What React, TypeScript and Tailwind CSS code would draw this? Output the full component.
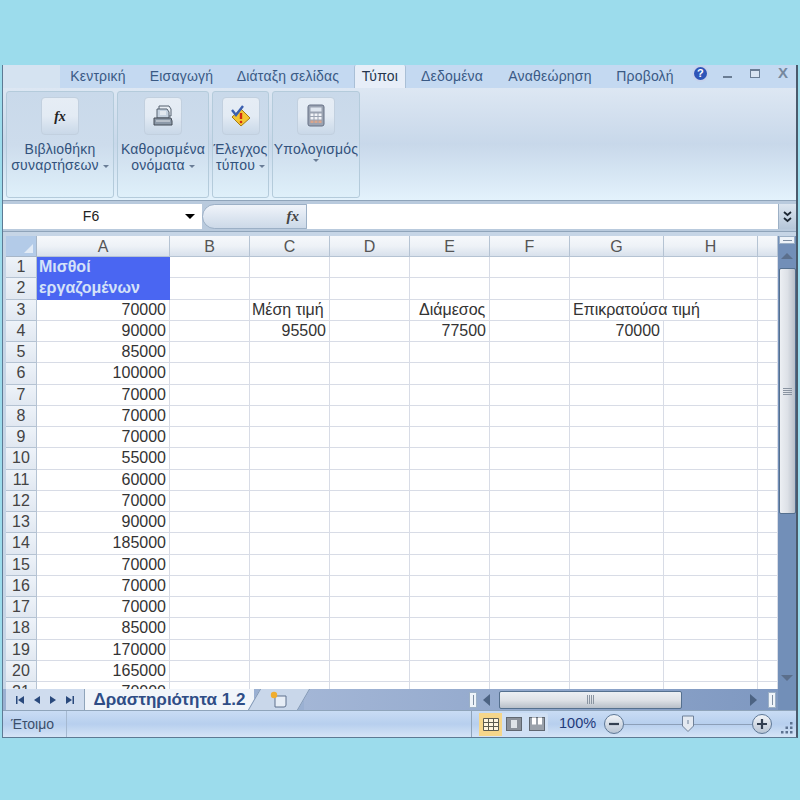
import React from "react";

const colWidths = [133, 80, 80, 80, 80, 80, 94, 94, 20];
const colNames = ["A", "B", "C", "D", "E", "F", "G", "H", ""];
const salaries = [
  70000, 90000, 85000, 100000, 70000, 70000, 70000, 55000, 60000, 70000, 90000,
  185000, 70000, 70000, 70000, 85000, 170000, 165000, 70000,
];

const tabs = [
  { label: "Κεντρική", w: "w-[70px]" },
  { label: "Εισαγωγή", w: "w-[97px]" },
  { label: "Διάταξη σελίδας", w: "w-[116px]" },
];
const tabsRight = [
  { label: "Δεδομένα", w: "w-[92px]" },
  { label: "Αναθεώρηση", w: "w-[104px]" },
  { label: "Προβολή", w: "w-[86px]" },
];

const FxIcon = ({ small }: { small?: boolean }) => (
  <span
    className={`font-['Liberation_Serif',serif] italic font-bold ${small ? "text-[15px] text-[#444]" : "text-[14px] text-[#222]"}`}
  >
    fx
  </span>
);

const PrinterIcon = () => (
  <svg width="24" height="24" viewBox="0 0 24 24">
    <path d="M8 2h10l2 3v7H8z" fill="#e8eef5" stroke="#55606e" />
    <path d="M6 5h10l2 3v6H6z" fill="#c5d2e0" stroke="#55606e" />
    <path d="M9 8h6M9 10h6" stroke="#fff" />
    <path d="M3 14h17l1 3v4H3z" fill="#8c99a8" stroke="#444c56" />
    <path d="M5 17h14" stroke="#e4e8ec" />
  </svg>
);

const CheckIcon = () => (
  <svg width="24" height="24" viewBox="0 0 24 24">
    <path d="M12 5l9 9-9 8-9-9z" fill="#f3c632" stroke="#a87a12" />
    <path d="M12 9v6" stroke="#d12b12" strokeWidth="2.4" />
    <circle cx="12" cy="18" r="1.3" fill="#d12b12" />
    <path d="M3 6l4 5 7-9" fill="none" stroke="#3a5fb0" strokeWidth="2.4" />
  </svg>
);

const CalcIcon = () => (
  <svg width="20" height="24" viewBox="0 0 20 24">
    <rect x="2" y="1" width="16" height="21" rx="2" fill="#9aa3b2" stroke="#667085" />
    <rect x="4.5" y="3.5" width="11" height="4" fill="#dfe6ef" />
    {[9.5, 13, 16.5].map((y) =>
      [4.5, 8.5, 12.5].map((x) => (
        <rect key={`${x}-${y}`} x={x} y={y} width="3" height="2.5" fill={y === 16.5 ? "#d9a58c" : "#f2f4f8"} />
      )),
    )}
  </svg>
);

const Caret = () => (
  <span className="inline-block w-0 h-0 ml-[4px] mb-[2px] border-x-[3px] border-x-transparent border-t-[3px] border-t-[#6a7d96]" />
);

const RibbonGroup = ({
  w,
  icon,
  line1,
  line2,
  caretOwnLine,
}: {
  w: string;
  icon: React.ReactNode;
  line1: string;
  line2?: string;
  caretOwnLine?: boolean;
}) => (
  <div
    className={`${w} h-[107px] mr-[3px] shrink-0 flex flex-col items-center rounded-[3px] border border-[#b4cbdb] bg-gradient-to-b from-[#c9d9ea] via-[#cddcec] to-[#dff0fa] pt-[5px]`}
  >
    <div className="w-[38px] h-[38px] rounded-[4px] flex items-center justify-center bg-gradient-to-b from-[#e6edf5] via-[#e3ebf4] to-[#c9d8e8] border border-[#c2d0df]">
      {icon}
    </div>
    <div className="mt-[6px] text-[14px] leading-[16px] text-center text-[#32527c] whitespace-nowrap tracking-[0.2px]">
      <div>{line1}</div>
      {caretOwnLine ? (
        <div className="flex justify-center pt-[2px]">
          <span className="inline-block w-0 h-0 border-x-[3px] border-x-transparent border-t-[3px] border-t-[#6a7d96]" />
        </div>
      ) : (
        <div>
          {line2}
          <Caret />
        </div>
      )}
    </div>
  </div>
);

const ScrollArrow = ({ d }: { d: string }) => (
  <svg width="12" height="10" viewBox="0 0 12 10">
    <path d={d} fill="#5b6f8c" />
  </svg>
);

const ScrollArrowLeft = () => (
  <svg width="8" height="12" viewBox="0 0 8 12" className="shrink-0">
    <path d="M7 0v12L0 6z" fill="#4c6383" />
  </svg>
);

const ScrollArrowRight = () => (
  <svg width="8" height="12" viewBox="0 0 8 12" className="shrink-0">
    <path d="M1 0v12l7-6z" fill="#4c6383" />
  </svg>
);

const ZoomBtn = ({ sign }: { sign: "minus" | "plus" }) => (
  <div className="w-[20px] h-[20px] shrink-0 rounded-full border border-[#5f7896] bg-gradient-to-b from-[#f1f4f8] to-[#b9c5d4] flex items-center justify-center">
    <svg width="12" height="12" viewBox="0 0 12 12">
      <path d={sign === "plus" ? "M1 6h10M6 1v10" : "M1 6h10"} stroke="#333f50" strokeWidth="2.2" />
    </svg>
  </div>
);

const Row = ({ n, clipped }: { n: number; clipped?: boolean }) => {
  const salary = n >= 3 ? salaries[n - 3] : null;
  const cell = (i: number) => {
    if (i === 0 && n === 1) return <span className="font-bold text-[#d5e2f8] pl-[2px]">Μισθοί</span>;
    if (i === 0 && n === 2) return <span className="font-bold text-[#d5e2f8] pl-[2px]">εργαζομένων</span>;
    if (i === 0 && salary) return <span className="block text-right pr-[3px]">{salary}</span>;
    if (n === 3 && i === 2) return <span className="pl-[2px]">Μέση τιμή</span>;
    if (n === 3 && i === 4) return <span className="block pl-[9px]">Διάμεσος</span>;
    if (n === 3 && i === 6) return <span className="pl-[3px] whitespace-nowrap">Επικρατούσα τιμή</span>;
    if (n === 4 && i === 2) return <span className="block text-right pr-[3px]">95500</span>;
    if (n === 4 && i === 4) return <span className="block text-right pr-[3px]">77500</span>;
    if (n === 4 && i === 6) return <span className="block text-right pr-[3px]">70000</span>;
    return null;
  };
  return (
    <div className={`flex ${clipped ? "h-[7px] overflow-hidden" : "h-[21.25px]"}`}>
      <div className="w-[31px] shrink-0 h-[21.25px] flex items-center justify-center border-r border-b border-[#b5c3d3] bg-gradient-to-b from-[#eef3f9] to-[#e1e8f1] text-[16px] text-[#444]">
        {n}
      </div>
      {colWidths.map((w, i) => {
        const blue = i === 0 && n <= 2;
        return (
          <div
            key={i}
            style={{ width: w }}
            className={`shrink-0 h-[21.25px] leading-[20px] text-[16px] text-[#333] ${
              blue ? "bg-[#4a66f2]" : "border-r border-b border-[#d8dce6]"
            } ${i === 6 && n === 3 ? "border-r-0" : ""}`}
          >
            {cell(i)}
          </div>
        );
      })}
    </div>
  );
};

export default function App() {
  return (
    <div className="w-[800px] h-[800px] overflow-hidden bg-[#9cdcec] pt-[65px] pl-[2px] font-['Liberation_Sans',sans-serif]">
      <div className="w-[796px] h-[673px] flex flex-col bg-[#c5d6ea] border-l border-[#5d7a94] border-b border-b-[#5d7a94] border-r-[2px] border-r-[#4a5a6c]">
        {/* tab strip */}
        <div className="h-[23px] flex items-center bg-[#c4d9f1] text-[14px] text-[#3a5a85] shrink-0 tracking-[0.2px]">
          <div className="w-[60px] h-full shrink-0">
            <div className="w-[57px] h-full bg-[#d5e3f1]" />
          </div>
          {tabs.map((t) => (
            <div key={t.label} className={`${t.w} shrink-0 text-center whitespace-nowrap`}>
              {t.label}
            </div>
          ))}
          <div className="w-[8px] shrink-0" />
          <div className="w-[52px] h-full shrink-0 text-center leading-[23px] bg-[#e7eef8] text-[#25364d] border-x border-[#a9bfd6] rounded-t-[2px]">
            Τύποι
          </div>
          {tabsRight.map((t) => (
            <div key={t.label} className={`${t.w} shrink-0 text-center whitespace-nowrap`}>
              {t.label}
            </div>
          ))}
          <div className="flex items-center pl-[4px] text-[#6a7d94]">
            <div className="w-[17px] h-[17px] mb-[6px] rounded-full bg-[#2f55b8] border-2 border-[#c7d3ec] text-white text-[11px] font-bold leading-[13px] text-center">
              ?
            </div>
            <div className="w-[9px] h-[2px] ml-[14px] bg-[#6a7d94] mt-[1px]" />
            <div className="w-[10px] h-[9px] ml-[18px] mb-[6px] border border-[#6a7d94] border-t-2 bg-[#d8e4f2]" />
            <div className="font-bold text-[15px] ml-[18px] mb-[6px] text-[#75889e]">X</div>
          </div>
        </div>

        {/* ribbon */}
        <div className="h-[112px] shrink-0 flex items-start pl-[3px] pt-[3px] bg-gradient-to-b from-[#dde7f3] via-[#c8d8ea] to-[#e3f2fc]">
          <RibbonGroup w="w-[108px]" icon={<FxIcon />} line1="Βιβλιοθήκη" line2="συναρτήσεων" />
          <RibbonGroup w="w-[92px]" icon={<PrinterIcon />} line1="Καθορισμένα" line2="ονόματα" />
          <RibbonGroup w="w-[57px]" icon={<CheckIcon />} line1="Έλεγχος" line2="τύπου" />
          <RibbonGroup w="w-[88px]" icon={<CalcIcon />} line1="Υπολογισμός" caretOwnLine />
        </div>

        {/* formula bar */}
        <div className="h-[32px] shrink-0 flex items-start pt-[3px] bg-[#b9cadd] border-y border-[#8fa4ba]">
          <div className="w-[199px] h-[25px] bg-white shrink-0 flex items-center text-[14px] text-[#222]">
            <span className="w-[176px] text-center">F6</span>
            <span className="ml-[6px] w-0 h-0 border-x-[5px] border-x-transparent border-t-[5px] border-t-black" />
          </div>
          <div className="w-[105px] h-[25px] shrink-0 flex items-center justify-end pr-[7px] rounded-l-[13px] border border-[#9cb0c6] bg-gradient-to-b from-[#f0f4fa] to-[#ccd9e8]">
            <FxIcon small />
          </div>
          <div className="flex-1 h-[25px] bg-white" />
          <div className="w-[18px] h-[25px] shrink-0 flex items-center justify-center bg-gradient-to-b from-[#dde6f0] to-[#b5c6d9] border-l border-[#9cb0c6]">
            <svg width="11" height="12" viewBox="0 0 11 12">
              <path d="M2 1l3.5 3L9 1M2 7l3.5 3L9 7" fill="none" stroke="#1d2733" strokeWidth="1.8" />
            </svg>
          </div>
        </div>

        {/* sheet area */}
        <div className="flex-1 min-h-0 flex bg-[#c6d5e6] pt-[4px] pl-[3px]">
          <div className="w-[772px] flex flex-col shrink-0">
            <div className="h-[21px] flex shrink-0">
              <div className="w-[31px] shrink-0 flex items-end justify-end p-[3px] bg-[#b3cbe8] border-r border-b border-[#a6b6c8]">
                <span className="w-0 h-0 border-l-[9px] border-l-transparent border-b-[9px] border-b-[#e2ebf6]" />
              </div>
              {colNames.map((c, i) => (
                <div
                  key={i}
                  style={{ width: colWidths[i] }}
                  className="shrink-0 text-center leading-[21px] text-[16px] text-[#555] bg-gradient-to-b from-[#f6f8fb] via-[#eef2f7] to-[#d8e1ec] border-r border-b border-[#b5c3d3]"
                >
                  {c}
                </div>
              ))}
            </div>
            <div className="flex-1 min-h-0 bg-white overflow-hidden">
              {Array.from({ length: 20 }, (_, i) => (
                <Row key={i} n={i + 1} />
              ))}
              <Row n={21} clipped />
            </div>
          </div>
          {/* vertical scrollbar */}
          <div className="w-[18px] shrink-0 flex flex-col items-center bg-[#728fb8]">
            <div className="w-[16px] h-[8px] bg-[#eef3f9] border border-[#9cb0c6] flex items-center justify-center">
              <span className="w-[9px] h-px bg-[#7f8fa3]" />
            </div>
            <div className="h-[24px] w-full flex items-center justify-center">
              <ScrollArrow d="M0 8L6 2l6 6z" />
            </div>
            <div className="w-[17px] h-[246px] rounded-[2px] border border-[#55708f] bg-gradient-to-r from-[#eceff3] via-[#dde1e7] to-[#b8bfc9] flex flex-col items-center justify-center gap-[1px]">
              <span className="w-[9px] h-px bg-[#8a94a1]" />
              <span className="w-[9px] h-px bg-[#8a94a1]" />
              <span className="w-[9px] h-px bg-[#8a94a1]" />
              <span className="w-[9px] h-px bg-[#8a94a1]" />
            </div>
            <div className="flex-1" />
            <div className="h-[21px] w-full flex items-center justify-center pb-[2px]">
              <ScrollArrow d="M0 2h12L6 8z" />
            </div>
          </div>
        </div>

        {/* sheet tabs */}
        <div className="h-[21px] shrink-0 flex items-stretch bg-[#9ab0d2]">
          <div className="w-[79px] shrink-0 flex items-center justify-around px-[5px] bg-[#cfdcee] border-r border-[#8fa4ba] ml-[3px]">
            <svg width="10" height="10" viewBox="0 0 10 10"><path d="M1 1h1.5v8H1zM9 1v8L3 5z" fill="#2b4a7d" /></svg>
            <svg width="8" height="10" viewBox="0 0 8 10"><path d="M7 1v8L1 5z" fill="#2b4a7d" /></svg>
            <svg width="8" height="10" viewBox="0 0 8 10"><path d="M1 1v8l6-4z" fill="#2b4a7d" /></svg>
            <svg width="10" height="10" viewBox="0 0 10 10"><path d="M1 1v8l6-4zM7.5 1H9v8H7.5z" fill="#2b4a7d" /></svg>
          </div>
          <div className="w-[169px] shrink-0 text-center bg-[#f1f5fa] text-[17px] leading-[22px] font-bold text-[#2f4d86] whitespace-nowrap">
            Δραστηριότητα 1.2
          </div>
          <div className="w-[50px] shrink-0 flex items-center justify-center bg-[#c9d7ea] -skew-x-[30deg] border-x border-[#7f95b3]">
            <svg className="skew-x-[30deg]" width="20" height="17" viewBox="0 0 20 17">
              <path d="M6 5h11v9a2 2 0 0 1-2 2H6z" fill="#e6edf6" stroke="#5e718d" />
              <circle cx="5" cy="4" r="3.2" fill="#f0ad2e" />
            </svg>
          </div>
          <div className="flex-1 flex items-center justify-end bg-gradient-to-r from-[#a3b6d6] to-[#7d97c0]">
            <div className="w-[8px] h-[16px] mr-[6px] bg-[#eef3f9] border border-[#9cb0c6] flex items-center justify-center">
              <span className="w-px h-[10px] bg-[#7f8fa3]" />
            </div>
            <ScrollArrowLeft />
            <div className="w-[183px] h-[18px] ml-[8px] rounded-[2px] border border-[#55708f] bg-gradient-to-b from-[#eceff3] via-[#dfe2e7] to-[#b8bfc9] flex items-center justify-center gap-[1px]">
              <span className="w-px h-[9px] bg-[#8a94a1]" />
              <span className="w-px h-[9px] bg-[#8a94a1]" />
              <span className="w-px h-[9px] bg-[#8a94a1]" />
              <span className="w-px h-[9px] bg-[#8a94a1]" />
            </div>
            <div className="w-[67px]" />
            <ScrollArrowRight />
            <div className="w-[8px] h-[16px] ml-[11px] bg-[#eef3f9] border border-[#9cb0c6] flex items-center justify-center">
              <span className="w-px h-[10px] bg-[#7f8fa3]" />
            </div>
            <div className="w-[18px] self-stretch ml-[2px] bg-[#728fb8]" />
          </div>
        </div>

        {/* status bar */}
        <div className="h-[27px] shrink-0 flex items-center bg-gradient-to-b from-[#c9dcf4] via-[#b7cfee] to-[#d5e4f6] border-t border-[#8fa4ba] text-[#3b4f6b]">
          <div className="w-[64px] shrink-0 h-full flex items-center pl-[8px] text-[14px] border-r border-[#a5b9d1]">
            Έτοιμο
          </div>
          <div className="w-[405px] shrink-0 h-full border-r border-[#8fa4ba]" />
          <div className="ml-[7px] w-[69px] h-[23px] flex items-center shrink-0 rounded-[2px] bg-[#d0e0f4]">
            <div className="w-[23px] h-full flex items-center justify-center bg-[#f5d68a]">
              <svg width="16" height="13" viewBox="0 0 16 13">
                <path d="M.5.5h15v12H.5zM.5 4.5h15M.5 8.5h15M5.5.5v12M10.5.5v12" fill="#fff6e0" stroke="#5c5c50" />
              </svg>
            </div>
            <div className="w-[23px] flex justify-center">
              <svg width="16" height="14" viewBox="0 0 16 14">
                <rect x=".5" y=".5" width="15" height="13" fill="#8b919a" stroke="#606770" />
                <rect x="5" y="3" width="6" height="8" fill="#dfe3e8" />
              </svg>
            </div>
            <div className="w-[23px] flex justify-center">
              <svg width="16" height="14" viewBox="0 0 16 14">
                <rect x=".5" y=".5" width="15" height="13" fill="#9aa1aa" stroke="#606770" />
                <path d="M3 .5h4v7H3zM9 .5h4v7H9z" fill="#fff" />
              </svg>
            </div>
          </div>
          <div className="ml-[11px] w-[45px] text-[14.5px] text-[#1f3a7a] shrink-0">100%</div>
          <ZoomBtn sign="minus" />
          <div className="w-[128px] h-px bg-[#8c9fb8] shrink-0 flex items-center justify-center">
            <svg width="14" height="18" viewBox="0 0 14 18" className="shrink-0">
              <path d="M1.5 1h11v10L7 16.5 1.5 11z" fill="#e3e9f1" stroke="#6f8199" />
              <path d="M7 5v4" stroke="#6f8199" />
            </svg>
          </div>
          <ZoomBtn sign="plus" />
          <svg className="ml-[8px] mt-[8px] shrink-0" width="14" height="14" viewBox="0 0 14 14" fill="#5d7290">
            <rect x="10" y="1" width="2.5" height="2.5" />
            <rect x="5.5" y="5.5" width="2.5" height="2.5" />
            <rect x="10" y="5.5" width="2.5" height="2.5" />
            <rect x="1" y="10" width="2.5" height="2.5" />
            <rect x="5.5" y="10" width="2.5" height="2.5" />
            <rect x="10" y="10" width="2.5" height="2.5" />
          </svg>
        </div>
      </div>
    </div>
  );
}
